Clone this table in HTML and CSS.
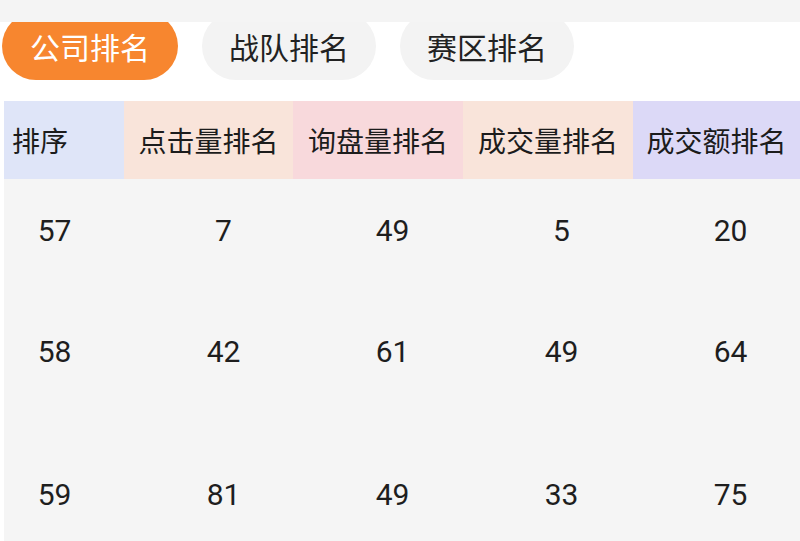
FILE: index.html
```html
<!DOCTYPE html>
<html lang="zh">
<head>
<meta charset="utf-8">
<title>排名</title>
<link rel="stylesheet" href="styles.css">
</head>
<body>
<div class="topbar"></div>
<nav class="tabs">
  <div class="tab tab-active">公司排名</div>
  <div class="tab">战队排名</div>
  <div class="tab">赛区排名</div>
</nav>
<section class="table">
  <div class="head">
    <div class="hcell hcell-first c-blue">排序</div>
    <div class="hcell c-peach">点击量排名</div>
    <div class="hcell c-pink">询盘量排名</div>
    <div class="hcell c-peach">成交量排名</div>
    <div class="hcell c-lavender">成交额排名</div>
  </div>
  <div class="body">
    <div class="row row-short">
      <div class="cell">57</div><div class="cell">7</div><div class="cell">49</div><div class="cell">5</div><div class="cell">20</div>
    </div>
    <div class="row">
      <div class="cell">58</div><div class="cell">42</div><div class="cell">61</div><div class="cell">49</div><div class="cell">64</div>
    </div>
    <div class="row row-last">
      <div class="cell">59</div><div class="cell">81</div><div class="cell">49</div><div class="cell">33</div><div class="cell">75</div>
    </div>
  </div>
</section>
</body>
</html>
```
FILE: styles.css
```css
html, body {
  margin: 0;
  padding: 0;
  background: #ffffff;
  overflow: hidden;
}
body {
  width: 800px;
  height: 541px;
  font-family: Roboto, "Noto Sans CJK SC", sans-serif;
  color: #1e1e1e;
}
.topbar {
  height: 22px;
  background: #f4f4f4;
}
.tabs {
  height: 79px;
  display: flex;
  align-items: flex-start;
  gap: 24px;
  padding-left: 2px;
  overflow: hidden;
}
.tab {
  margin-top: -10px;
  height: 68px;
  line-height: 68px;
  padding: 0 27px;
  border-radius: 34px;
  background: #f3f3f3;
  font-family: "Noto Sans CJK SC", sans-serif;
  font-size: 30px;
  color: #222;
  white-space: nowrap;
}
.tab-active {
  padding: 0 28px;
  background: #f7862f;
  color: #ffffff;
}
.table {
  margin-left: 4px;
  overflow: hidden;
}
.head {
  display: grid;
  grid-template-columns: 120px 169px 170px 170px 167px;
  height: 78px;
}
.hcell {
  display: flex;
  align-items: center;
  justify-content: center;
  font-family: "Noto Sans CJK SC", sans-serif;
  font-size: 28px;
  color: #1c1c1c;
  white-space: nowrap;
}
.hcell-first {
  justify-content: flex-start;
  padding-left: 8px;
}
.c-blue { background: #dfe5f8; }
.c-peach { background: #f9e4da; }
.c-pink { background: #f8d9dc; }
.c-lavender { background: #dcd9f7; }
.body {
  background: #f5f5f5;
}
.row {
  display: grid;
  grid-template-columns: repeat(5, 169px);
  margin-left: -34px;
  height: 143px;
  padding-top: 37px;
  box-sizing: border-box;
}
.row-short {
  height: 121px;
}
.row-last {
  height: 98px;
}
.cell {
  text-align: center;
  font-size: 30px;
  line-height: 30px;
  color: #1e1e1e;
}
```
